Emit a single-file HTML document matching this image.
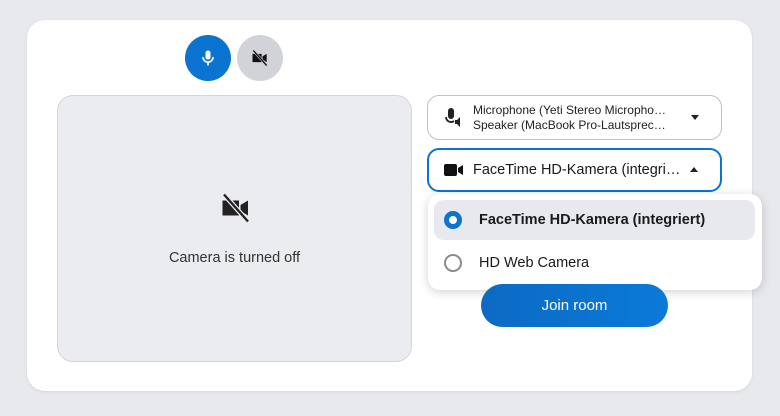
<!DOCTYPE html>
<html><head><style>
*{box-sizing:border-box;margin:0;padding:0}
body{width:780px;height:416px;background:#e8e9ed;font-family:"Liberation Sans",sans-serif;position:relative;overflow:hidden}
.card{position:absolute;left:27px;top:20px;width:725px;height:371px;background:#fff;border-radius:18px;box-shadow:0 1px 3px rgba(0,0,0,.08)}
.abs{position:absolute}
.circ{position:absolute;width:46px;height:46px;border-radius:50%;display:flex;align-items:center;justify-content:center}
.preview{left:57px;top:95px;width:355px;height:267px;background:#ebecf0;border:1px solid #d4d5da;border-radius:16px}
.sel{left:427px;width:295px;border-radius:12px;background:#fff;display:flex;align-items:center}
.dd{left:428px;top:194px;width:334px;height:96px;background:#fff;border-radius:12px;box-shadow:0 2px 10px rgba(0,0,0,.18)}
.row{position:absolute;left:6px;width:321px;height:40px;border-radius:10px;display:flex;align-items:center;font-size:14.5px;color:#1a1a1a}
.radio{width:18px;height:18px;border-radius:50%;margin:0 17px 0 10px}
.join{left:481px;top:284px;width:187px;height:43px;border-radius:22px;background:linear-gradient(90deg,#0c6ac4,#0a7ad8);color:#fff;font-size:15px;display:flex;align-items:center;justify-content:center}
</style></head><body>
<div class="card"></div>
<div class="circ" style="left:185px;top:35px;background:#0a74d0">
<svg width="20" height="20" viewBox="0 0 24 24" fill="#fff"><rect x="9" y="3" width="6" height="11" rx="3"/><path d="M6 11a6 6 0 0 0 12 0" stroke="#fff" stroke-width="2" fill="none"/><rect x="11" y="17" width="2" height="4"/></svg></div>
<div class="circ" style="left:237px;top:35px;background:#d2d3d8">
<svg width="20" height="20" viewBox="0 0 24 24"><path d="M3 7h11v10H3z M15 10l5-3v10l-5-3z" fill="#111"/><path d="M4 3l16 18" stroke="#d2d3d8" stroke-width="3"/><path d="M4 3l16 18" stroke="#111" stroke-width="1.6"/></svg></div>
<div class="abs preview"></div>
<svg class="abs" style="left:218px;top:190px" width="36" height="36" viewBox="0 0 24 24"><path d="M3 7h11v10H3z M15 10l5-3v10l-5-3z" fill="#222"/><path d="M4 3l16 18" stroke="#ebecf0" stroke-width="3.2"/><path d="M4 3l16 18" stroke="#222" stroke-width="1.6"/></svg>
<div class="abs" style="left:57px;width:355px;top:250px;text-align:center;font-size:14.5px;color:#333">Camera is turned off</div>
<div class="abs sel" style="top:95px;height:45px;border:1px solid #bfc0c5">
<svg style="margin-left:16px" width="20" height="22" viewBox="0 0 20 22"><rect x="4" y="1" width="6" height="11" rx="3" fill="#222"/><path d="M2 10a5 5 0 0 0 8 4" stroke="#222" stroke-width="1.8" fill="none"/><path d="M11 13h2l3-3v10l-3-3h-2z" fill="#222"/></svg>
<div style="margin-left:9px;font-size:12px;line-height:15px;color:#222">Microphone (Yeti Stereo Micropho…<br>Speaker (MacBook Pro-Lautsprec…</div>
<div style="position:absolute;right:22px;top:19px;border:4px solid transparent;border-top:5px solid #222;border-bottom:0"></div>
</div>
<div class="abs sel" style="top:148px;height:44px;border:2px solid #0a74d0">
<svg style="margin-left:15px" width="20" height="14" viewBox="0 0 20 14"><rect x="0" y="1" width="13" height="12" rx="2" fill="#111"/><path d="M14 5l5-3v10l-5-3z" fill="#111"/></svg>
<div style="margin-left:9px;font-size:14.5px;color:#1a1a1a">FaceTime HD-Kamera (integri…</div>
<div style="position:absolute;right:22px;top:17px;border:4px solid transparent;border-bottom:5px solid #222;border-top:0"></div>
</div>
<div class="abs dd">
<div class="row" style="top:6px;background:#e8e9ee;font-weight:bold"><div class="radio" style="border:5px solid #0a74d0;background:#fff"></div>FaceTime HD-Kamera (integriert)</div>
<div class="row" style="top:49px"><div class="radio" style="border:2px solid #8a8a8f"></div>HD Web Camera</div>
</div>
<div class="abs join">Join room</div>
</body></html>
